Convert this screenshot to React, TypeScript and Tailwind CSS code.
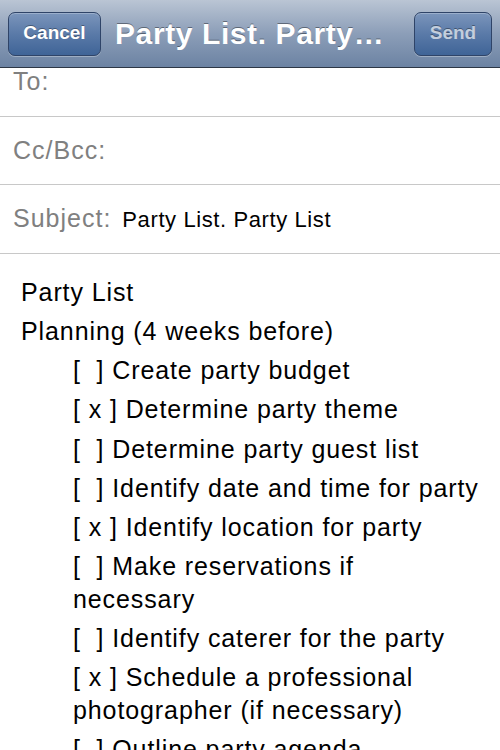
import React from 'react';

const lines: { text: string[]; indent?: boolean }[] = [
  { text: ['Party List'] },
  { text: ['Planning (4 weeks before)'] },
  { text: ['[  ] Create party budget'], indent: true },
  { text: ['[ x ] Determine party theme'], indent: true },
  { text: ['[  ] Determine party guest list'], indent: true },
  { text: ['[  ] Identify date and time for party'], indent: true },
  { text: ['[ x ] Identify location for party'], indent: true },
  { text: ['[  ] Make reservations if', 'necessary'], indent: true },
  { text: ['[  ] Identify caterer for the party'], indent: true },
  { text: ['[ x ] Schedule a professional', 'photographer (if necessary)'], indent: true },
  { text: ['[  ] Outline party agenda'], indent: true },
];

function NavButton({ label, dim }: { label: string; dim?: boolean }) {
  return (
    <button
      className={`h-[44px] shrink-0 rounded-[7px] border border-[#2f4468] bg-gradient-to-b from-[#7b95bb] via-[#5a7aa8] to-[#3f6497] text-[19px] font-bold shadow-[inset_0_1px_0_rgba(255,255,255,0.25),0_1px_0_rgba(255,255,255,0.3)] [text-shadow:0_-1px_0_rgba(0,0,0,0.35)] ${
        dim ? 'w-[78px] text-[#c3cedd]' : 'w-[93px] text-white'
      }`}
    >
      {label}
    </button>
  );
}

function Field({ label, value, height }: { label: string; value?: string; height: string }) {
  return (
    <div className={`flex items-center border-b border-[#c8c8c8] px-[13px] ${height}`}>
      <span className="text-[25px] tracking-[1px] text-[#808080]">{label}</span>
      {value && <span className="ml-[11px] text-[22px] tracking-[0.6px] text-black">{value}</span>}
    </div>
  );
}

export default function App() {
  return (
    <div className="h-[750px] w-[500px] overflow-hidden bg-white font-['Liberation_Sans',Arial,sans-serif]">
      {/* Nav bar */}
      <div className="flex h-[68px] items-center gap-[14px] border-b border-[#2d3745] bg-gradient-to-b from-[#bac5d4] via-[#8c9eb8] to-[#6c83a3] px-[8px]">
        <NavButton label="Cancel" />
        <h1 className="min-w-0 flex-1 truncate text-[30px] font-bold tracking-[0.6px] text-white [text-shadow:0_-1px_0_rgba(0,0,0,0.4)]">
          Party List. Party…
        </h1>
        <NavButton label="Send" dim />
      </div>

      {/* Header fields */}
      <div className="flex h-[49px] items-start border-b border-[#c8c8c8] px-[13px]">
        <span className="-mt-[2px] text-[25px] leading-[30px] tracking-[1px] text-[#808080]">To:</span>
      </div>
      <Field label="Cc/Bcc:" height="h-[68px]" />
      <Field label="Subject:" value="Party List. Party List" height="h-[69px]" />

      {/* Body */}
      <div className="flex flex-col gap-[6.15px] pl-[21px] pt-[22px] text-[25px] leading-[33px] tracking-[0.9px] text-black">
        {lines.map((l, i) => (
          <div key={i} className={`whitespace-pre ${l.indent ? 'pl-[52px]' : ''}`}>
            {l.text.map((t, j) => (
              <div key={j}>{t}</div>
            ))}
          </div>
        ))}
      </div>
    </div>
  );
}
